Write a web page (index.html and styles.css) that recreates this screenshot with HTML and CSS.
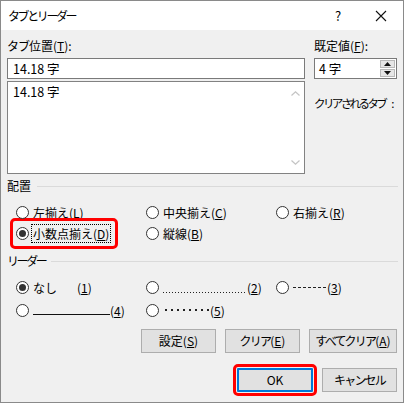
FILE: index.html
```html
<!DOCTYPE html>
<html lang="ja">

<head>
    <meta charset="UTF-8">
    <meta name="viewport" content="width=device-width, initial-scale=1.0">
    <title>タブとリーダー</title>

    <link rel="stylesheet" href="styles.css">
</head>

<body>

    <div class='dialog'>
        <!-- タイトルバー -->
        <div class='titlebar'>
            <span class='title'><span class='kana'>タブとリーダー</span></span>
            <span class='help'>?</span>
            <span class='close'>
                <svg width="12" height="12" viewBox="0 0 12 12">
                    <path d="M1 1L11 11M11 1L1 11" stroke="#111" stroke-width="1.1" fill="none" />
                </svg>
            </span>
        </div>

        <div class='content'>
            <!-- タブ位置 / 既定値 -->
            <div class='top'>
                <div class='main'>
                    <div class='label'><span class='kana soft'>タブ</span>位置(<u>T</u>):</div>
                    <div class='textbox'>14.18 字</div>
                    <div class='listbox'>
                        <div class='list-item'>14.18 字</div>
                        <div class='scrollbar'>
                            <svg width="9" height="5" viewBox="0 0 9 5">
                                <path d="M0.5 4.5L4.5 0.8L8.5 4.5" stroke="#c4c4c4" stroke-width="1.2" fill="none" />
                            </svg>
                            <svg width="9" height="5" viewBox="0 0 9 5">
                                <path d="M0.5 0.5L4.5 4.2L8.5 0.5" stroke="#c4c4c4" stroke-width="1.2" fill="none" />
                            </svg>
                        </div>
                    </div>
                </div>
                <div class='side'>
                    <div class='label'>既定値(<u>F</u>):</div>
                    <div class='spin'>
                        <span class='spin-value'>4 字</span>
                        <div class='spin-btns'>
                            <span class='spin-btn'>
                                <svg width="7" height="4" viewBox="0 0 7 4"><path d="M0 4L3.5 0L7 4Z" fill="#111" /></svg>
                            </span>
                            <span class='spin-btn'>
                                <svg width="7" height="4" viewBox="0 0 7 4"><path d="M0 0L3.5 4L7 0Z" fill="#111" /></svg>
                            </span>
                        </div>
                    </div>
                    <div class='note'><span class='tight'>クリアされるタブ</span><span class='colon'>:</span></div>
                </div>
            </div>

            <!-- 配置 -->
            <div class='group-title'><span>配置</span><i class='rule'></i></div>
            <div class='radio-grid align'>
                <div class='radio'><i class='dot'></i><span>左揃え(<u>L</u>)</span></div>
                <div class='radio'><i class='dot'></i><span>中央揃え(<u>C</u>)</span></div>
                <div class='radio'><i class='dot'></i><span>右揃え(<u>R</u>)</span></div>
                <div class='radio marked'><i class='dot on'></i><span class='focus'>小数点揃え(<u>D</u>)</span></div>
                <div class='radio'><i class='dot'></i><span>縦線(<u>B</u>)</span></div>
            </div>

            <!-- リーダー -->
            <div class='group-title lead'><span class='kana'>リーダー</span><i class='rule'></i></div>
            <div class='radio-grid leader'>
                <div class='radio'><i class='dot on'></i><span class='none'>なし</span><span>(<u>1</u>)</span></div>
                <div class='radio'><i class='dot'></i><i class='fill dots' style="width: 84px"></i><span>(<u>2</u>)</span></div>
                <div class='radio'><i class='dot'></i><i class='fill dashes' style="width: 34px"></i><span>(<u>3</u>)</span></div>
                <div class='radio'><i class='dot'></i><i class='fill line' style="width: 77px"></i><span>(<u>4</u>)</span></div>
                <div class='radio'><i class='dot'></i><i class='fill mids' style="width: 47px"></i><span>(<u>5</u>)</span></div>
            </div>

            <!-- ボタン -->
            <div class='btn-row'>
                <button class='btn'>設定(<u>S</u>)</button>
                <button class='btn'><span class='kana'>クリア</span>(<u>E</u>)</button>
                <button class='btn wide'><span class='kana'>すべてクリア</span>(<u>A</u>)</button>
            </div>
            <div class='btn-row last'>
                <button class='btn default marked-btn'>OK</button>
                <button class='btn'><span class='kana'>キャンセル</span></button>
            </div>
        </div>
    </div>

</body>

</html>
```

FILE: styles.css
```css
* {
    padding: 0;
    margin: 0;
}

html,
body {
    height: 100%;
    overflow: hidden;
}

body {
    font-family: "Noto Sans CJK JP", "Noto Sans", sans-serif;
    font-size: 12px;
    color: #000;
    background: #fff;
}

u {
    text-decoration-thickness: 1px;
    text-underline-offset: 1px;
}

/* カタカナは詰め気味に */
.kana {
    letter-spacing: -2.4px;
}

.kana.soft {
    letter-spacing: -1px;
}

.dialog {
    width: 404px;
    height: 403px;
    box-sizing: border-box;
    border: 1px solid #8a8a8a;
    background: #f0f0f0;
    display: flex;
    flex-direction: column;
}

/* タイトルバー */
.titlebar {
    height: 29px;
    flex: none;
    background: #fff;
    display: flex;
    align-items: center;
}

.titlebar .title {
    padding-left: 7px;
    flex: 1;
}

.titlebar .help {
    width: 20px;
    margin-right: 11px;
    text-align: center;
    font-size: 13px;
}

.titlebar .close {
    width: 44px;
    height: 29px;
    display: flex;
    align-items: center;
    justify-content: center;
}

.content {
    padding: 9px 5px 0 6px;
}

/* 上段 */
.top {
    display: flex;
    gap: 9px;
}

.main {
    width: 298px;
}

.side {
    width: 83px;
}

.label {
    height: 14px;
    line-height: 14px;
    margin-bottom: 5px;
    white-space: nowrap;
}

.textbox {
    height: 21px;
    box-sizing: border-box;
    border: 1px solid #7a7a7a;
    background: #fff;
    padding-left: 5px;
    line-height: 19px;
    font-size: 12.5px;
}

.listbox {
    margin-top: 2px;
    height: 93px;
    box-sizing: border-box;
    border: 1px solid #828282;
    background: #fff;
    display: flex;
}

.list-item {
    flex: 1;
    padding: 1px 0 0 5px;
    line-height: 17px;
    font-size: 12.5px;
}

.scrollbar {
    width: 17px;
    display: flex;
    flex-direction: column;
    align-items: center;
    justify-content: space-between;
    padding: 9px 0 8px;
}

.spin {
    height: 21px;
    box-sizing: border-box;
    border: 1px solid #7a7a7a;
    background: #fff;
    display: flex;
    align-items: center;
    justify-content: space-between;
    padding: 0 0 0 4px;
}

.spin-value {
    font-size: 12.5px;
}

.spin-btns {
    display: flex;
    flex-direction: column;
    gap: 1px;
    margin-right: 1px;
}

.spin-btn {
    width: 15px;
    height: 8px;
    background: #e6e6e6;
    border: 1px solid #b9b9b9;
    box-sizing: border-box;
    display: flex;
    align-items: center;
    justify-content: center;
}

.note {
    margin-top: 17px;
    line-height: 14px;
    font-size: 11.5px;
    white-space: nowrap;
    display: flex;
}

.note .tight {
    letter-spacing: -2.6px;
}

.note .colon {
    margin-left: 6px;
}

/* グループ見出し */
.group-title {
    margin-top: 5px;
    height: 14px;
    line-height: 14px;
    display: flex;
    align-items: center;
    gap: 6px;
}

.group-title.lead {
    margin-top: 11px;
    gap: 6px;
}

.rule {
    flex: 1;
    height: 1px;
    background: #dadada;
}

/* ラジオボタン */
.radio-grid {
    margin-top: 9px;
    padding-left: 9px;
    display: grid;
    grid-template-columns: 130px 130px 1fr;
    grid-auto-rows: 20px;
    row-gap: 1px;
}

.radio-grid.leader {
    row-gap: 3px;
}

.radio {
    display: flex;
    align-items: center;
    justify-self: start;
    white-space: nowrap;
}

.dot {
    width: 13px;
    height: 13px;
    box-sizing: border-box;
    border: 1px solid #333;
    border-radius: 50%;
    background: #fff;
    margin-right: 4px;
    position: relative;
}

.dot.on::after {
    content: '';
    position: absolute;
    left: 2px;
    top: 2px;
    width: 7px;
    height: 7px;
    border-radius: 50%;
    background: #333;
}

.focus {
    border: 1px dotted #000;
    padding: 0 1px;
    margin-left: -2px;
    line-height: 17px;
}

.radio.marked {
    outline: 3px solid #f00;
    border-radius: 2px;
    padding: 2px 4px 3px 3px;
    margin: -2px -4px -3px -3px;
}

.none {
    width: 44px;
}

.fill {
    display: block;
    height: 20px;
    flex: none;
}

.fill.dots {
    background: repeating-linear-gradient(to right, #222 0 1px, transparent 1px 3px) 0 15px / 100% 1px no-repeat;
}

.fill.dashes {
    background: repeating-linear-gradient(to right, #222 0 3px, transparent 3px 5px) 0 10px / 100% 1px no-repeat;
}

.fill.line {
    background: linear-gradient(#111, #111) 0 14px / 100% 1px no-repeat;
}

.fill.mids {
    background: repeating-linear-gradient(to right, #222 0 2px, transparent 2px 6px) 2px 9px / 100% 2px no-repeat;
}

/* ボタン */
.btn-row {
    margin-top: 9px;
    display: flex;
    justify-content: flex-end;
    gap: 9px;
    padding-right: 1px;
}

.btn-row.last {
    margin-top: 15px;
}

.btn {
    width: 75px;
    height: 24px;
    box-sizing: border-box;
    border: 1px solid #adadad;
    background: #e1e1e1;
    font: inherit;
    color: #000;
    line-height: 20px;
    white-space: nowrap;
    padding: 0;
}

.btn .kana {
    letter-spacing: -1.8px;
}

.btn.wide {
    width: 88px;
}

.btn.default {
    width: 76px;
    border: 2px solid #0078d7;
}

.btn.marked-btn {
    outline: 3px solid #f00;
    outline-offset: 1px;
    border-radius: 1px;
}
```
